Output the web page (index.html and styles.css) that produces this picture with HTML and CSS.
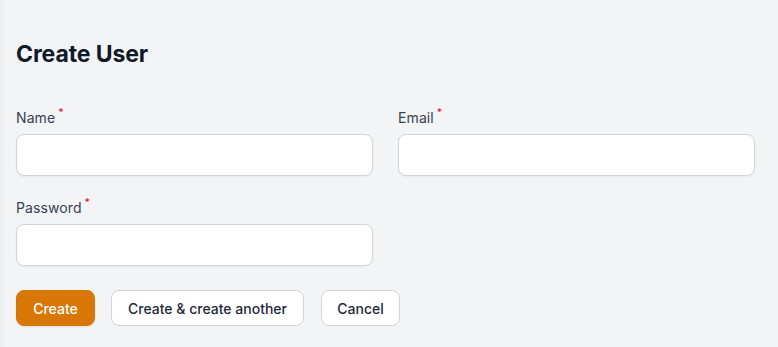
FILE: index.html
```html
<!DOCTYPE html>
<html lang="en">
<head>
<meta charset="utf-8">
<title>Create User</title>
<link rel="stylesheet" href="styles.css">
</head>
<body>
<main class="page">
  <h1 class="heading">Create User</h1>
  <form class="form">
    <div class="grid">
      <div class="field">
        <label class="label" for="name">Name<sup class="req">*</sup></label>
        <input class="input" id="name" type="text">
      </div>
      <div class="field">
        <label class="label" for="email">Email<sup class="req">*</sup></label>
        <input class="input" id="email" type="email">
      </div>
      <div class="field">
        <label class="label" for="password">Password<sup class="req">*</sup></label>
        <input class="input" id="password" type="password">
      </div>
    </div>
    <div class="actions">
      <button type="button" class="btn btn-primary">Create</button>
      <button type="button" class="btn btn-secondary btn-wide">Create &amp; create another</button>
      <button type="button" class="btn btn-secondary btn-cancel">Cancel</button>
    </div>
  </form>
</main>
</body>
</html>
```

FILE: styles.css
```css
html, body {
  margin: 0;
  padding: 0;
  height: 100%;
}
body {
  background: #f3f4f6;
  font-family: Inter, "Liberation Sans", sans-serif;
  color: #111827;
  box-shadow: inset 6px 0 6px -4px rgba(0, 0, 0, 0.04);
}
.page {
  padding: 38px 23px 0 16px;
}
.heading {
  margin: 0;
  font-size: 23px;
  line-height: 32px;
  font-weight: 700;
  color: #111827;
  letter-spacing: -0.1px;
}
.form {
  margin-top: 38px;
}
.grid {
  display: grid;
  grid-template-columns: 1fr 1fr;
  column-gap: 25px;
  row-gap: 22px;
}
.field {
  display: flex;
  flex-direction: column;
}
.label {
  font-size: 14px;
  line-height: 20px;
  font-weight: 400;
  color: #374151;
  margin-bottom: 6px;
  letter-spacing: 0.1px;
}
.req {
  color: #e11d48;
  font-size: 10px;
  margin-left: 3px;
  vertical-align: 7px;
  line-height: 0;
  font-weight: 600;
}
.input {
  box-sizing: border-box;
  height: 42px;
  width: 100%;
  background: #fff;
  border: 1px solid #d1d5db;
  border-radius: 8px;
  box-shadow: 0 1px 2px rgba(0, 0, 0, 0.05);
  font: inherit;
  margin: 0;
}
.actions {
  display: flex;
  gap: 16px;
  margin-top: 24px;
}
.btn {
  box-sizing: border-box;
  height: 36px;
  padding: 0;
  border-radius: 8px;
  font-family: Inter, "Liberation Sans", sans-serif;
  font-size: 14px;
  font-weight: 500;
  letter-spacing: 0;
  white-space: nowrap;
  cursor: pointer;
}
.btn-primary {
  background: #d97706;
  color: #fff;
  border: 1px solid #d97706;
  width: 79px;
  box-shadow: 0 1px 2px rgba(0, 0, 0, 0.08);
}
.btn-secondary {
  background: #fff;
  color: #1f2937;
  border: 1px solid #d1d5db;
}
.btn-wide {
  width: 193px;
}
.btn-cancel {
  width: 79px;
  margin-left: 1px;
}
```
